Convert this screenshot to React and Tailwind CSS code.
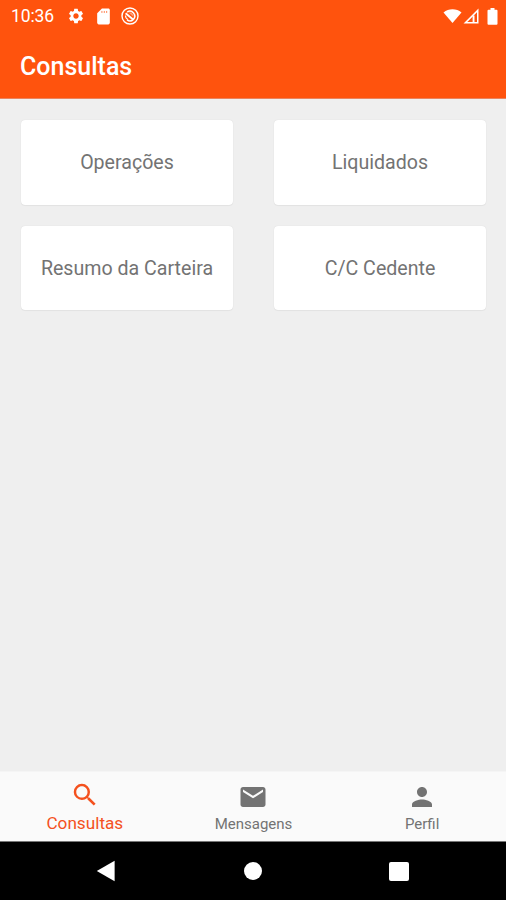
import React, { useState } from "react";
import { MdSearch, MdEmail, MdPerson, MdSettings } from "react-icons/md";

const cards = ["Operações", "Liquidados", "Resumo da Carteira", "C/C Cedente"];

const tabs = [
  { label: "Consultas", icon: MdSearch },
  { label: "Mensagens", icon: MdEmail },
  { label: "Perfil", icon: MdPerson },
];

const StatusBar = () => (
  <div className="flex h-8 items-center pl-[11px] pr-[8px] text-white">
    <span className="text-[17.5px] leading-8 tracking-[-0.1px]">10:36</span>
    <MdSettings className="ml-[13px] h-[18px] w-[18px]" />
    <svg viewBox="0 0 24 24" className="ml-[9px] h-[19px] w-[19px]" fill="currentColor">
      <path d="M18 2h-8L4 8v12c0 1.1.9 2 2 2h12c1.1 0 2-.9 2-2V4c0-1.100-.9-2-2-2z" />
      <path d="M10 5v2.500M13 5v2.500M16 5v2.500" stroke="#ff7d4d" strokeWidth="1.200" />
    </svg>
    <svg viewBox="0 0 18 18" className="ml-[8px] h-[18px] w-[18px]" fill="none" stroke="currentColor">
      <circle cx="9" cy="9" r="8" strokeWidth="1.400" />
      <path d="M6 12.900A4.800 4.800 0 1 0 6.200 5.100" strokeWidth="1.500" />
      <path d="M4.600 6.200 11.800 12.200" strokeWidth="1.900" />
      <path d="M4.500 8.500c0 2 1 3.300 2.600 4" strokeWidth="1.100" />
      <path d="M7.500 5.500h3l2 2.500v2z" fill="#ff9b76" stroke="none" />
    </svg>
    <div className="ml-auto flex items-center">
      <svg viewBox="0 0 19 16" className="h-4 w-[19px]" fill="currentColor">
        <path d="M.5 4.600C5.500.2 13.500.2 18.500 4.600L9.500 15z" />
      </svg>
      <svg viewBox="0 0 16 16" className="ml-[1px] h-4 w-4" fill="currentColor">
        <path d="M15.500.5v15H.5zM14 4.200 4.300 14H14z" fillRule="evenodd" />
        <path d="M9.600 7.500h1.900v7H9.600z" />
      </svg>
      <svg viewBox="0 0 11 17" className="ml-[8px] h-[17px] w-[11px]" fill="currentColor">
        <path d="M3.500 0h4v1.700h2q1 0 1 1v13q0 1-1 1h-8q-1 0-1-1v-13q0-1 1-1h2z" />
      </svg>
    </div>
  </div>
);

const App = () => {
  const [active, setActive] = useState("Consultas");

  return (
    <div className="flex h-[900px] w-[506px] flex-col overflow-hidden bg-[#efefef] font-[Roboto,sans-serif]">
      <header className="h-[99px] border-b border-[#e9845f] bg-[#ff530d]">
        <StatusBar />
        <h1 className="pl-[20px] pt-[18px] text-[25px] font-medium leading-[34px] text-white">
          Consultas
        </h1>
      </header>

      <main className="flex-1 pl-[21px] pr-[20px] pt-[21px]">
        <div className="grid grid-cols-2 gap-x-[41px] gap-y-[21px]">
          {cards.map((card) => (
            <button
              key={card}
              className="flex h-[84.500px] items-center justify-center whitespace-nowrap rounded-[4px] bg-white pt-[1px] text-[19.600px] text-[#737373] shadow-[0_0_1px_rgba(0,0,0,0.14),0_1px_1px_rgba(0,0,0,0.04)]"
            >
              {card}
            </button>
          ))}
        </div>
      </main>

      <nav className="grid h-[70px] grid-cols-3 border-t border-[#f5f5f5] bg-[#fafafa]">
        {tabs.map(({ label, icon: Icon }) => (
          <button
            key={label}
            onClick={() => setActive(label)}
            className={`flex flex-col items-center pl-[1px] ${
              active === label
                ? "pt-[8px] text-[17.200px] text-[#f4511e]"
                : "pt-[10px] text-[15px] text-[#737373]"
            }`}
          >
            <Icon className="h-[30px] w-[30px]" />
            <span className={`leading-[20px] ${active === label ? "mt-[3px]" : "mt-[2px]"}`}>
              {label}
            </span>
          </button>
        ))}
      </nav>

      {/* Android navigation bar */}
      <div className="grid h-[59px] grid-cols-[1fr_20px_1fr] items-center border-t border-[#777777] bg-black text-white">
        <svg viewBox="0 0 20 22" className="ml-[96px] h-[22px] w-5" fill="currentColor">
          <path d="M.8 11 18.600.8v20.400z" />
        </svg>
        <span className="ml-[1px] h-[18px] w-[18px] rounded-full bg-white" />
        <span className="ml-[126px] h-[19px] w-[20px] rounded-[2px] bg-white" />
      </div>
    </div>
  );
};

export default App;
